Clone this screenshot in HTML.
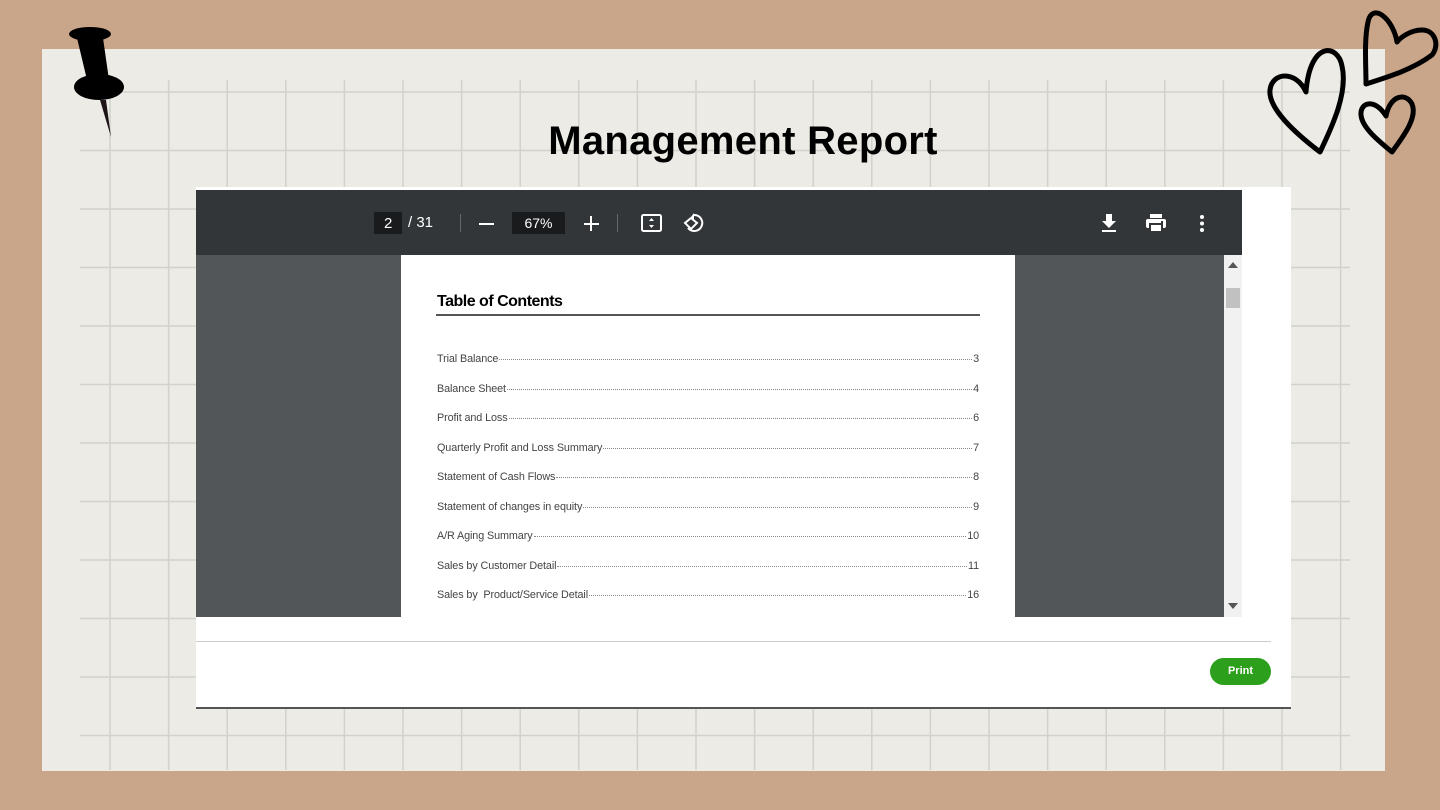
<!DOCTYPE html>
<html><head><meta charset="utf-8"><style>
*{margin:0;padding:0;box-sizing:border-box}
body{width:1440px;height:810px;overflow:hidden;background:#c9a58a;position:relative;font-family:"Liberation Sans",sans-serif}
.paper{position:absolute;left:42px;top:49px;width:1343px;height:722px;background:#ecebe5}
.abs{position:absolute}
h1{position:absolute;left:0;width:1486px;top:119px;text-align:center;font-size:40px;font-weight:bold;color:#000;letter-spacing:0.3px}
.panel{position:absolute;left:196px;top:187px;width:1095px;height:522px;background:#fff;border-bottom:2px solid #555}
.tb{position:absolute;left:0;top:3px;width:1046px;height:65px;background:#323639;color:#fff}
.view{position:absolute;left:0;top:68px;width:1028px;height:362px;background:#525659}
.sb{position:absolute;left:1028px;top:68px;width:18px;height:362px;background:#f1f1f1}
.page{position:absolute;left:205px;top:68px;width:614px;height:362px;background:#fff}
.toc{position:absolute;left:36px;width:542px;font-size:10.8px;color:#444;display:flex;align-items:baseline;letter-spacing:-0.1px}
.toc .d{flex:1;border-bottom:1px dotted #888;margin:0 1px;transform:translateY(-2px)}
</style></head><body>
<div class="paper"></div>
<svg class="abs" style="left:0;top:0" width="1440" height="810">
<g stroke="#d2d1cb" stroke-width="1.5" fill="none">
<path d="M80 92H1350M80 150.5H1350M80 209H1350M80 267.5H1350M80 326H1350M80 384.5H1350M80 443H1350M80 501.5H1350M80 560H1350M80 618.5H1350M80 677H1350M80 735.5H1350"/>
<path d="M110 80V770M168.6 80V770M227.2 80V770M285.8 80V770M344.4 80V770M403 80V770M461.6 80V770M520.2 80V770M578.8 80V770M637.4 80V770M696 80V770M754.6 80V770M813.2 80V770M871.8 80V770M930.4 80V770M989 80V770M1047.6 80V770M1106.2 80V770M1164.8 80V770M1223.4 80V770M1282 80V770M1340.6 80V770"/>
</g>
<g fill="#000">
<ellipse cx="90" cy="34" rx="21" ry="7"/>
<path d="M77 38L103 38L109 80L88 84Z"/>
<ellipse cx="99" cy="87" rx="25" ry="13"/>
<path d="M100 100L111 137L106 100Z" fill="#1e1418"/>
</g>
<g fill="none" stroke="#000" stroke-width="5" stroke-linecap="round" stroke-linejoin="round">
<path d="M1306 92C1296 70 1272 72 1270 90C1268 108 1295 133 1320 152C1333 125 1348 92 1342 66C1338 44 1310 40 1306 92Z"/>
<path d="M1397 42C1393 18 1372 2 1368 22C1364 40 1366 65 1366 84C1385 78 1412 70 1432 55C1440 45 1435 30 1422 30C1410 30 1400 38 1397 42Z"/>
<path d="M1386 116C1375 98 1360 102 1361 115C1362 128 1380 142 1392 152C1402 138 1418 118 1412 104C1406 92 1390 95 1386 116Z"/>
</g>
</svg>
<h1>Management Report</h1>
<div class="panel">
 <div class="tb">
  <div class="abs" style="left:178px;top:22px;width:28px;height:22px;background:#191b1c"></div>
  <div class="abs" style="left:188px;top:25px;font-size:15px">2</div>
  <div class="abs" style="left:212px;top:24px;font-size:15px">/ 31</div>
  <div class="abs" style="left:264px;top:24px;width:1px;height:18px;background:#666"></div>
  <div class="abs" style="left:283px;top:33px;width:15px;height:2px;background:#fff"></div>
  <div class="abs" style="left:316px;top:22px;width:53px;height:22px;background:#191b1c;font-size:14px;text-align:center;line-height:22px">67%</div>
  <div class="abs" style="left:388px;top:33px;width:15px;height:2px;background:#fff"></div>
  <div class="abs" style="left:394px;top:26px;width:2px;height:15px;background:#fff"></div>
  <div class="abs" style="left:421px;top:24px;width:1px;height:18px;background:#666"></div>
  <svg class="abs" style="left:444px;top:22px" width="24" height="22"><rect x="2" y="3" width="19" height="16" rx="1.5" fill="none" stroke="#fff" stroke-width="2"/><path d="M11.5 6l-2.5 3h5zM11.5 16l-2.5-3h5z" fill="#fff"/></svg>
  <svg class="abs" style="left:486px;top:21px" width="24" height="24"><path d="M12 4a8 8 0 1 1-6 13" fill="none" stroke="#fff" stroke-width="2"/><path d="M9 6l3 -4v8z" fill="#fff"/><path d="M9 7l-6 5 6 6 6-6z" fill="none" stroke="#fff" stroke-width="2"/></svg>
  <svg class="abs" style="left:904px;top:22px" width="18" height="22"><path d="M6 2h6v7h4l-7 7-7-7h4z" fill="#fff"/><rect x="2" y="18" width="14" height="2" fill="#fff"/></svg>
  <svg class="abs" style="left:949px;top:23px" width="22" height="20"><rect x="5" y="1" width="12" height="4" fill="#fff"/><rect x="1" y="6" width="20" height="9" rx="2" fill="#fff"/><rect x="5" y="11" width="12" height="8" fill="#fff" stroke="#323639" stroke-width="2"/><rect x="16" y="8" width="2" height="2" fill="#323639"/></svg>
  <svg class="abs" style="left:1002px;top:24px" width="8" height="20"><circle cx="4" cy="3" r="2" fill="#fff"/><circle cx="4" cy="9.5" r="2" fill="#fff"/><circle cx="4" cy="16" r="2" fill="#fff"/></svg>
 </div>
 <div class="view"></div>
 <div class="sb"><svg class="abs" style="left:4px;top:7px" width="10" height="6"><path d="M0 6L5 0L10 6z" fill="#555"/></svg><div class="abs" style="left:2px;top:33px;width:14px;height:20px;background:#c1c1c1"></div><svg class="abs" style="left:4px;top:348px" width="10" height="6"><path d="M0 0L5 6L10 0z" fill="#555"/></svg></div>
 <div class="page">
  <div class="abs" style="left:36px;top:38px;font-size:16px;font-weight:bold;color:#000;letter-spacing:-0.5px">Table of Contents</div>
  <div class="abs" style="left:35px;top:59px;width:544px;height:2px;background:#555"></div>
  <div class="toc" style="top:98px">Trial Balance<span class="d"></span>3</div>
  <div class="toc" style="top:128px">Balance Sheet<span class="d"></span>4</div>
  <div class="toc" style="top:157px">Profit and Loss<span class="d"></span>6</div>
  <div class="toc" style="top:187px">Quarterly Profit and Loss Summary<span class="d"></span>7</div>
  <div class="toc" style="top:216px">Statement of Cash Flows<span class="d"></span>8</div>
  <div class="toc" style="top:246px">Statement of changes in equity<span class="d"></span>9</div>
  <div class="toc" style="top:275px">A/R Aging Summary<span class="d"></span>10</div>
  <div class="toc" style="top:305px">Sales by Customer Detail<span class="d"></span>11</div>
  <div class="toc" style="top:334px">Sales by&nbsp; Product/Service Detail<span class="d"></span>16</div>
 </div>
 <div class="abs" style="left:0;top:454px;width:1075px;height:1px;background:#ccc"></div>
 <div class="abs" style="left:1014px;top:471px;width:61px;height:27px;border-radius:14px;background:#2ca01c;color:#fff;font-size:11px;font-weight:bold;text-align:center;line-height:27px">Print</div>
</div>
</body></html>
